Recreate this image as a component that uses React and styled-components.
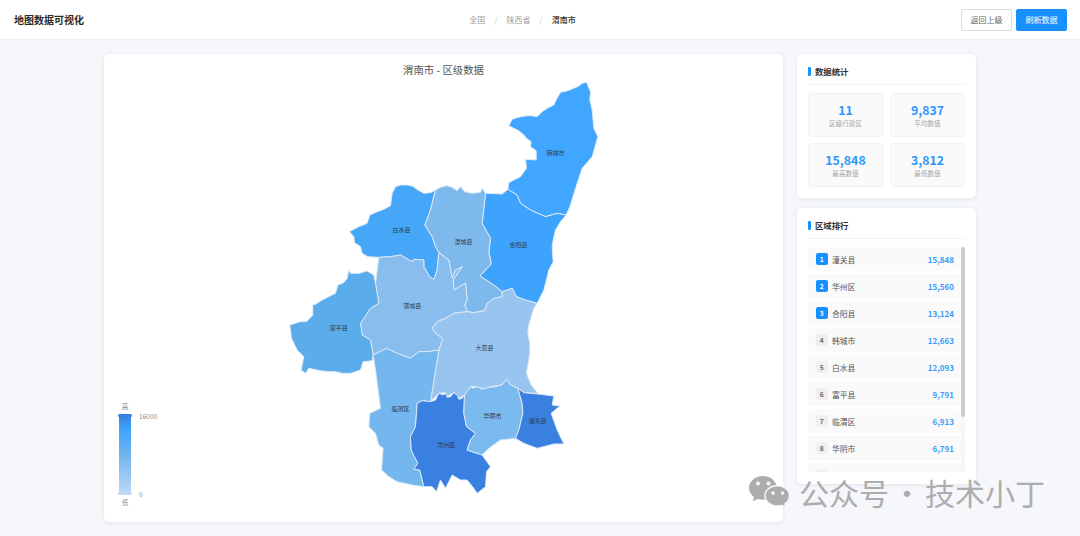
import React from "react";
import styled, { createGlobalStyle } from "styled-components";

const GlobalStyle = createGlobalStyle`
html, body {
  margin: 0;
  padding: 0;
  height: 536px;
  overflow: hidden;
  background: #f5f7fb;
  font-family: "Noto Sans CJK SC", "Noto Sans", sans-serif;
}
* { box-sizing: border-box; }
`

const Page = styled.div`
position: relative;
width: 1080px;
height: 536px;
overflow: hidden;
`

const Header = styled.header`
height: 40px;
padding: 0 13px 0 14px;
background: #fff;
border-bottom: 1px solid #eceef2;
display: flex;
align-items: center;
justify-content: space-between;
`

const Logo = styled.div`
font-size: 10px;
font-weight: 700;
color: #2b2b2b;
`

const Crumbs = styled.nav`
display: flex;
align-items: center;
gap: 8px;
font-size: 8px;
color: #a0a0a0;
`

const Crumb = styled.span`
color: ${({ current }) => (current ? "#333" : "#a0a0a0")};
font-weight: ${({ current }) => (current ? 500 : 400)};
`

const Sep = styled.span`
color: #c8c8c8;
margin: 0 1px;
`

const Actions = styled.div`
display: flex;
justify-content: flex-end;
gap: 4px;
`

const Button = styled.button`
width: 51px;
height: 22px;
padding: 0;
border-radius: 2px;
border: 1px solid ${({ primary }) => (primary ? "#1890ff" : "#dcdcdc")};
background: ${({ primary }) => (primary ? "#1890ff" : "#fff")};
color: ${({ primary }) => (primary ? "#fff" : "#666")};
font-family: inherit;
font-size: 8px;
`

const Main = styled.main`
display: flex;
align-items: flex-start;
justify-content: center;
gap: 14px;
padding-top: 14px;
`

const Card = styled.section`
background: #fff;
border-radius: 5px;
box-shadow: 0 1px 5px rgba(30, 40, 70, 0.09);
`

const MapCard = styled(Card)`
position: relative;
width: 679px;
height: 468px;
padding-top: 9px;
display: flex;
flex-direction: column;
align-items: center;
`

const MapTitle = styled.h1`
margin: 0 0 3px;
height: 14px;
line-height: 14px;
font-size: 10.4px;
font-weight: 400;
color: #555;
white-space: pre;
`

const RegionText = styled.text`
font-size: 18px;
fill: #2c3a4c;
text-anchor: middle;
dominant-baseline: central;
`

const Legend = styled.div`
position: absolute;
left: 14px;
bottom: 15px;
width: 56px;
display: flex;
flex-direction: column;
align-items: flex-start;
font-size: 6.6px;
color: #8a8a8a;
`

const LegendEnd = styled.span`
width: 14px;
height: 9px;
line-height: 9px;
text-align: center;
margin-bottom: ${({ gap }) => gap || 0}px;
`

const LegendBody = styled.div`
display: flex;
gap: 7px;
height: 81px;
margin-bottom: 3px;
`

const LegendBar = styled.div`
position: relative;
width: 14px;
height: 81px;
&::before {
  content: "";
  position: absolute;
  left: 1px;
  right: 1px;
  top: 1px;
  bottom: 1px;
  background: linear-gradient(#3a80e0 0%, #40a6ff 20%, #6db3ee 48%, #bcd9f6 100%);
}
`

const LegendHandle = styled.i`
position: absolute;
left: 0;
width: 14px;
height: 3px;
border-radius: 2px;
background: ${({ color }) => color};
${({ top }) => (top ? "top: 0;" : "bottom: 0;")}
`

const LegendScale = styled.div`
display: flex;
flex-direction: column;
justify-content: space-between;
height: 86px;
margin-top: -2px;
line-height: 8px;
`

const Side = styled.aside`
width: 179px;
display: flex;
flex-direction: column;
gap: 10px;
`

const StatsCard = styled(Card)`
height: 144px;
padding: 11px;
`

const RankCard = styled(Card)`
height: 276px;
padding: 11px;
`

const PanelTitle = styled.h2`
margin: 0 0 8px;
height: 20px;
padding: 0 0 8px 7px;
font-size: 8.4px;
line-height: 12px;
font-weight: 700;
color: #333;
border-bottom: 1px solid #f4f4f4;
position: relative;
&::before {
  content: "";
  position: absolute;
  left: 0;
  top: 2px;
  width: 2.5px;
  height: 9px;
  background: #1890ff;
  border-radius: 1px;
}
`

const StatsGrid = styled.div`
display: grid;
grid-template-columns: 75px 75px;
grid-auto-rows: 44px;
column-gap: 7px;
row-gap: 6px;
`

const StatCell = styled.div`
background: #fafafa;
border: 1px solid #f3f3f3;
border-radius: 3px;
display: flex;
flex-direction: column;
align-items: center;
justify-content: center;
`

const StatValue = styled.div`
font-size: 12.3px;
line-height: 16px;
font-weight: 700;
color: #2a97fd;
`

const StatLabel = styled.div`
font-size: 6.6px;
line-height: 10px;
color: #a3a3a3;
`

const RankBox = styled.div`
position: relative;
height: 225px;
padding-right: 4px;
`

const RankList = styled.div`
height: 225px;
overflow: hidden;
display: flex;
flex-direction: column;
gap: 3px;
`

const ScrollTrack = styled.div`
position: absolute;
top: 0;
right: 0;
width: 4px;
height: 225px;
background: #f6f6f6;
`

const ScrollThumb = styled.div`
width: 4px;
border-radius: 2px;
background: #cccccc;
`

const RankRow = styled.div`
flex: 0 0 24px;
height: 24px;
padding: 0 7px 0 8px;
background: #fafafa;
border-radius: 3px;
display: flex;
align-items: center;
`

const RankBadge = styled.span`
width: 11.5px;
height: 12px;
margin-right: 4.5px;
border-radius: 2px;
background: ${({ top }) => (top ? "#1890ff" : "#f0f0f0")};
color: ${({ top }) => (top ? "#fff" : "#666")};
font-size: 6.6px;
font-weight: 700;
line-height: 12px;
text-align: center;
`

const RankName = styled.span`
flex: 1;
font-size: 7.8px;
color: #555;
`

const RankValue = styled.span`
font-size: 8px;
font-weight: 700;
color: #3a9bfb;
`

const Watermark = styled.div`
position: absolute;
left: 749px;
top: 475px;
display: flex;
align-items: center;
gap: 9px;
color: #adadad;
font-size: 30px;
line-height: 34px;
white-space: pre;
pointer-events: none;
`

const WatermarkDot = styled.span`
display: inline-block;
width: 36px;
text-align: center;
`

const regions = [
    {
        name: "韩城市", fill: "#40a6ff", x: 825, y: 276,
        points: "918,67 930,95 928,120 935,150 940,205 952,230 935,290 905,325 885,385 868,440 857,465 830,460 795,470 750,450 720,430 710,405 682,388 685,368 700,360 720,350 738,325 735,298 767,300 767,272 750,260 752,245 738,235 730,225 715,212 700,205 685,197 695,178 712,172 735,168 750,167 770,170 785,155 800,145 820,135 828,118 840,97 862,92 880,85 895,78 905,70"
    },
    {
        name: "合阳县", fill: "#3ea3fd", x: 714, y: 554,
        points: "615,400 665,402 682,388 710,405 720,430 750,450 795,470 830,460 857,465 840,485 825,510 818,540 815,560 818,605 805,630 800,650 790,690 770,730 735,720 708,710 695,685 665,695 640,675 598,648 632,612 625,575 630,535 605,490"
    },
    {
        name: "白水县", fill: "#46a7f8", x: 363, y: 507,
        points: "345,380 360,375 380,375 395,378 412,390 430,400 450,398 465,390 450,450 433,495 455,530 465,560 475,578 470,630 460,658 447,650 430,620 430,600 400,598 395,605 360,585 330,590 295,592 262,590 245,580 240,560 222,548 220,530 207,515 235,500 260,490 268,465 290,455 310,448 330,437 335,400"
    },
    {
        name: "澄城县", fill: "#7db9ec", x: 549, y: 543,
        points: "465,390 480,382 500,377 515,382 530,392 540,380 552,395 575,400 600,397 605,385 615,400 605,490 630,535 625,575 632,612 598,648 640,675 665,695 665,710 640,715 620,730 612,752 580,758 560,755 553,735 560,720 555,670 520,690 518,660 545,620 525,630 515,655 505,600 475,578 465,560 455,530 433,495 450,450"
    },
    {
        name: "蒲城县", fill: "#88bdee", x: 395, y: 735,
        points: "295,592 330,590 360,585 395,605 400,598 430,600 430,620 447,650 460,658 470,630 475,578 505,600 515,655 525,630 545,620 518,660 520,690 555,670 560,720 553,735 560,755 520,760 495,775 470,785 455,805 465,820 487,835 475,870 440,875 415,875 390,895 350,880 318,865 278,885 270,840 245,825 240,790 270,745 295,730 285,670"
    },
    {
        name: "富平县", fill: "#5aacea", x: 175, y: 802,
        points: "205,630 210,640 235,640 260,633 280,645 285,670 295,730 270,745 240,790 245,825 270,840 278,885 275,902 248,905 240,930 210,940 185,940 165,935 145,935 120,932 85,925 75,940 62,930 70,890 50,870 33,835 28,795 60,785 78,785 97,765 97,735 105,733 125,720 165,700 172,675 190,668 200,655"
    },
    {
        name: "大荔县", fill: "#98c5ef", x: 612, y: 863,
        points: "612,752 620,730 640,715 665,710 665,695 695,685 708,710 735,720 770,730 760,745 745,795 742,820 748,850 748,880 738,940 752,975 772,1000 730,998 712,985 690,975 678,958 665,975 630,980 610,988 590,980 570,980 552,1005 535,1015 520,998 500,1010 495,998 475,1000 450,1025 475,870 487,835 465,820 455,805 470,785 495,775 520,760 560,755 580,758"
    },
    {
        name: "临渭区", fill: "#74b6ee", x: 360, y: 1045,
        points: "278,885 318,865 350,880 390,895 415,875 440,875 475,870 450,1025 425,1022 410,1030 405,1100 390,1130 392,1170 412,1210 400,1228 418,1230 430,1280 395,1275 350,1265 325,1250 303,1230 308,1165 295,1155 285,1120 265,1100 268,1060 300,1045 285,930"
    },
    {
        name: "华州区", fill: "#3a80e0", x: 498, y: 1152,
        points: "450,1025 465,1020 475,1000 490,1005 495,998 500,1012 510,1010 520,998 530,1005 535,1018 545,1015 552,1005 550,1060 558,1100 585,1120 570,1140 560,1170 605,1185 630,1220 618,1235 615,1280 590,1300 580,1285 560,1260 540,1260 515,1245 495,1285 480,1260 468,1295 455,1280 430,1280 418,1230 400,1228 412,1210 392,1170 390,1130 405,1100 410,1030 425,1022"
    },
    {
        name: "华阴市", fill: "#7abaef", x: 636, y: 1065,
        points: "552,1005 570,980 575,985 590,980 605,988 615,985 630,982 645,980 665,975 678,958 690,975 712,985 725,1030 727,1060 715,1110 705,1135 660,1140 625,1165 605,1185 560,1170 570,1140 585,1120 558,1100 550,1060"
    },
    {
        name: "潼关县", fill: "#3a80e0", x: 771, y: 1081,
        points: "712,985 730,998 772,1002 820,1008 815,1035 838,1038 812,1060 830,1110 850,1152 820,1152 770,1165 730,1150 705,1135 715,1110 727,1060 725,1030"
    },
];

const stats = [
    { value: "11", label: "区级行政区" },
    { value: "9,837", label: "平均数值" },
    { value: "15,848", label: "最高数值" },
    { value: "3,812", label: "最低数值" },
];

const ranking = [
    ["潼关县", "15,848"],
    ["华州区", "15,560"],
    ["合阳县", "13,124"],
    ["韩城市", "12,663"],
    ["白水县", "12,093"],
    ["富平县", "9,791"],
    ["临渭区", "6,913"],
    ["华阴市", "6,791"],
    ["澄城县", "5,931"],
    ["蒲城县", "5,681"],
    ["大荔县", "3,812"],
];

const WeChatIcon = () => (
    <svg width="41" height="32" viewBox="0 0 41 32">
        <path d="M14 0C6.3 0 0 5.3 0 12c0 3.7 2 6.9 5 9.1L3.6 25.500l5-2.600c1.700.5 3.500.8 5.400.8 7.700 0 14-5.300 14-11.700S21.700 0 14 0z" fill="#adadad" />
        <path d="M28.500 9.500C21.600 9.500 16 14.100 16 19.800s5.600 10.300 12.500 10.300c1.500 0 3-.2 4.300-.7l4.200 2.300-1.100-3.800c2.900-1.900 4.600-4.800 4.600-8.100 0-5.700-5.600-10.300-12.500-10.300z" fill="#adadad" stroke="#f5f7fb" strokeWidth="1.500" />
        <circle cx="9" cy="7.500" r="2" fill="#f5f7fb" />
        <circle cx="19.500" cy="7.500" r="2" fill="#f5f7fb" />
        <circle cx="24" cy="17" r="1.700" fill="#f5f7fb" />
        <circle cx="33.500" cy="17" r="1.700" fill="#f5f7fb" />
    </svg>
);

const App = () => {
    // list is 297px tall in a 225px box, thumb follows from that
    const thumbHeight = 225 * 225 / (ranking.length * 27);

    return (
        <Page>
            <GlobalStyle />
            <Header>
                <Logo>地图数据可视化</Logo>
                <Crumbs>
                    <Crumb>全国</Crumb>
                    <Sep>/</Sep>
                    <Crumb>陕西省</Crumb>
                    <Sep>/</Sep>
                    <Crumb current>渭南市</Crumb>
                </Crumbs>
                <Actions>
                    <Button>返回上级</Button>
                    <Button primary>刷新数据</Button>
                </Actions>
            </Header>
            <Main>
                <MapCard>
                    <MapTitle>渭南市 - 区级数据</MapTitle>
                    <svg width="330" height="420" viewBox="-4.5 60 990 1260">
                        {regions.map(r => (
                            <polygon key={r.name} points={r.points} fill={r.fill} stroke="#dbe8f6" strokeWidth="3" strokeLinejoin="round" />
                        ))}
                        {regions.map(r => (
                            <RegionText key={r.name} x={r.x} y={r.y}>{r.name}</RegionText>
                        ))}
                    </svg>
                    <Legend>
                        <LegendEnd gap={3}>高</LegendEnd>
                        <LegendBody>
                            <LegendBar>
                                <LegendHandle top color="#3a80e0" />
                                <LegendHandle color="#bcd9f6" />
                            </LegendBar>
                            <LegendScale>
                                <span>16000</span>
                                <span>0</span>
                            </LegendScale>
                        </LegendBody>
                        <LegendEnd>低</LegendEnd>
                    </Legend>
                </MapCard>
                <Side>
                    <StatsCard>
                        <PanelTitle>数据统计</PanelTitle>
                        <StatsGrid>
                            {stats.map(s => (
                                <StatCell key={s.label}>
                                    <StatValue>{s.value}</StatValue>
                                    <StatLabel>{s.label}</StatLabel>
                                </StatCell>
                            ))}
                        </StatsGrid>
                    </StatsCard>
                    <RankCard>
                        <PanelTitle>区域排行</PanelTitle>
                        <RankBox>
                            <RankList>
                                {ranking.map(([name, value], i) => (
                                    <RankRow key={name}>
                                        <RankBadge top={i < 3}>{i + 1}</RankBadge>
                                        <RankName>{name}</RankName>
                                        <RankValue>{value}</RankValue>
                                    </RankRow>
                                ))}
                            </RankList>
                            <ScrollTrack>
                                <ScrollThumb style={{ height: thumbHeight }} />
                            </ScrollTrack>
                        </RankBox>
                    </RankCard>
                </Side>
            </Main>
            <Watermark>
                <WeChatIcon />
                <span>公众号<WatermarkDot>·</WatermarkDot>技术小丁</span>
            </Watermark>
        </Page>
    );
};

export default App;
